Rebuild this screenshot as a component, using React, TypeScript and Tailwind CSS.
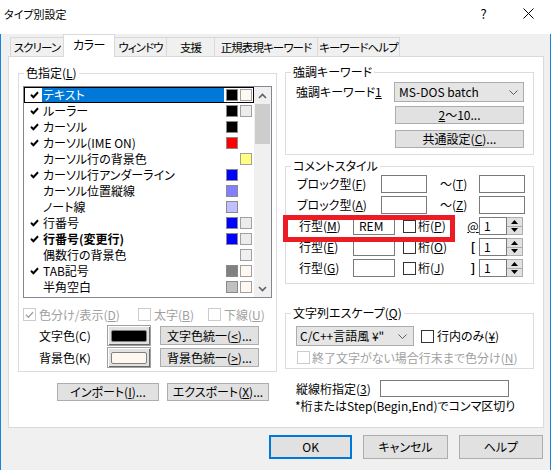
import React from 'react'

type Row = { label: string; check: boolean; a?: string; b?: string; sel?: boolean; bold?: boolean }

const rows: Row[] = [
  { label: 'テキスト', check: true, a: 'bg-[#000000]', b: 'bg-[#fff8f0]', sel: true },
  { label: 'ルーラー', check: true, a: 'bg-[#000000]', b: 'bg-[#ececec]' },
  { label: 'カーソル', check: true, a: 'bg-[#000000]' },
  { label: 'カーソル(IME ON)', check: true, a: 'bg-[#ff0000]' },
  { label: 'カーソル行の背景色', check: false, b: 'bg-[#ffff80]' },
  { label: 'カーソル行アンダーライン', check: true, a: 'bg-[#0000ff]' },
  { label: 'カーソル位置縦線', check: false, a: 'bg-[#8080ff]' },
  { label: 'ノート線', check: false, a: 'bg-[#c0c0ff]' },
  { label: '行番号', check: true, a: 'bg-[#0000ff]', b: 'bg-[#ececec]' },
  { label: '行番号(変更行)', check: true, a: 'bg-[#0000ff]', b: 'bg-[#ececec]', bold: true },
  { label: '偶数行の背景色', check: false, b: 'bg-[#f0f0f0]' },
  { label: 'TAB記号', check: true, a: 'bg-[#808080]', b: 'bg-[#fff8f0]' },
  { label: '半角空白', check: false, a: 'bg-[#c0c0c0]', b: 'bg-[#fff8f0]' },
]

function Tick({ color = '#000', w = 2 }: { color?: string; w?: number }) {
  return (
    <svg width="9" height="8" viewBox="0 0 9 8">
      <path d="M1 3.8 L3.4 6.2 L8 1.2" fill="none" stroke={color} strokeWidth={w} />
    </svg>
  )
}

function Box({ checked, disabled }: { checked?: boolean; disabled?: boolean }) {
  return (
    <span
      className={
        disabled
          ? 'flex h-[13px] w-[13px] shrink-0 items-center justify-center border border-[#cccccc] bg-white'
          : 'flex h-[13px] w-[13px] shrink-0 items-center justify-center border border-[#333333] bg-white'
      }
    >
      {checked && <Tick color={disabled ? '#a0a0a0' : '#000'} w={1.3} />}
    </span>
  )
}

function Btn({ children, className = '' }: { children: React.ReactNode; className?: string }) {
  return (
    <div className={`flex items-center justify-center whitespace-nowrap border border-[#adadad] bg-[#e1e1e1] ${className}`}>
      {children}
    </div>
  )
}

function Group({ title, className = '', children }: { title: React.ReactNode; className?: string; children: React.ReactNode }) {
  return (
    <fieldset className={`border border-[#dcdcdc] ${className}`}>
      <legend className="ml-[5px] px-[2px] leading-[14px]">{title}</legend>
      {children}
    </fieldset>
  )
}

function Chevron() {
  return (
    <svg width="9" height="5" viewBox="0 0 9 5">
      <path d="M0.5 0.5 L4.5 4.5 L8.5 0.5" fill="none" stroke="#606060" strokeWidth="1" />
    </svg>
  )
}

function Input({ className = '', children }: { className?: string; children?: React.ReactNode }) {
  return <div className={`flex items-center border border-[#7a7a7a] bg-white ${className}`}>{children}</div>
}

function Spin() {
  return (
    <div className="flex h-[18px] w-[44px]">
      <Input className="h-[18px] w-[28px] pl-[4px]">1</Input>
      <div className="flex w-[16px] flex-col border-y border-r border-[#adadad] bg-[#e1e1e1]">
        <div className="flex flex-1 items-center justify-center border-b border-[#adadad]">
          <svg width="7" height="4" viewBox="0 0 7 4"><path d="M0 4 L3.5 0 L7 4Z" fill="#000" /></svg>
        </div>
        <div className="flex flex-1 items-center justify-center">
          <svg width="7" height="4" viewBox="0 0 7 4"><path d="M0 0 L3.5 4 L7 0Z" fill="#000" /></svg>
        </div>
      </div>
    </div>
  )
}

function ColorBtn({ fill }: { fill: string }) {
  return (
    <div className="flex h-[21px] w-[44px] items-center justify-center border border-[#a0a0a0] bg-[#e1e1e1] shadow-[inset_1px_1px_0_#ffffff,inset_-1px_-1px_0_#696969]">
      <div className={`h-[12px] w-[36px] rounded-[2px] border border-[#808080] ${fill}`} />
    </div>
  )
}

function BlockRow({ a, b }: { a: string; b: string }) {
  return (
    <div className="flex h-[18px] items-center pl-[11px]">
      <span className="w-[84px]">ブロック型(<u>{a}</u>)</span>
      <Input className="h-[18px] w-[46px]" />
      <span className="w-[52px] pl-[13px]">〜(<u>{b}</u>)</span>
      <Input className="h-[18px] w-[46px]" />
    </div>
  )
}

function LineRow({ k, d, mark, text }: { k: string; d: string; mark: React.ReactNode; text?: string }) {
  return (
    <div className="flex h-[18px] items-center pl-[13px]">
      <span className="w-[54px]">行型(<u>{k}</u>)</span>
      <Input className="h-[18px] w-[42px] pl-[5px]">{text}</Input>
      <div className="ml-[8px] flex w-[64px] items-center gap-[2px]">
        <Box />
        <span>桁(<u>{d}</u>)</span>
      </div>
      <span className="w-[12px] text-center">{mark}</span>
      <Spin />
    </div>
  )
}

const tabs = [
  { t: 'スクリーン', w: 'w-[54px]' },
  { t: 'カラー', w: 'w-[52px]', sel: true },
  { t: 'ウィンドウ', w: 'w-[52px]' },
  { t: '支援', w: 'w-[48px]' },
  { t: '正規表現キーワード', w: 'w-[103px]' },
  { t: 'キーワードヘルプ', w: 'w-[82px]' },
]

export default function App() {
  return (
    <div className="h-[470px] w-[553px] bg-white font-['Noto_Sans_CJK_JP','Noto_Sans_CJK_SC',sans-serif] text-[12px] leading-[14px] text-black [font-feature-settings:'palt']">
      <div className="flex h-[27px] w-[551px] items-center">
        <span className="pl-[4px] text-[11px]">タイプ別設定</span>
        <span className="ml-auto flex w-[45px] justify-center text-[13px]">?</span>
        <span className="flex w-[45px] justify-center">
          <svg width="11" height="11" viewBox="0 0 11 11">
            <path d="M0.5 0.5 L10.5 10.5 M10.5 0.5 L0.5 10.5" stroke="#000" strokeWidth="1" />
          </svg>
        </span>
      </div>

      <div className="h-[442px] w-[551px] border-x border-b border-[#1883d7] bg-[#f0f0f0] px-[7px]">
        <div className="mt-[7px] flex h-[22px] items-end pl-[2px]">
          {tabs.map((tab, i) =>
            tab.sel ? (
              <div
                key={i}
                className={`relative z-10 -mb-px -ml-px flex h-[23px] items-center justify-center whitespace-nowrap border-x border-t border-[#d9d9d9] bg-white pb-[2px] tracking-[-0.5px] ${tab.w}`}
              >
                {tab.t}
              </div>
            ) : (
              <div
                key={i}
                className={`flex h-[19px] items-center justify-center overflow-hidden whitespace-nowrap border-t border-r border-[#d9d9d9] bg-[#f0f0f0] text-[11.5px] tracking-[-0.9px] ${i === 0 ? 'border-l' : ''} ${tab.w}`}
              >
                {tab.t}
              </div>
            ),
          )}
        </div>

        <div className="relative h-[372px] w-[536px] border border-[#d9d9d9] bg-white">
          <div className="flex items-start pl-[9px] pt-[8px]">
            {/* left column */}
            <div className="mt-[1px] w-[259px]">
              <Group title={<>色指定(<u>L</u>)</>} className="pb-[3px]">
                <div className="ml-[4px] mt-[6px] flex h-[212px] w-[249px] border border-[#828790] bg-white">
                  <div className="flex w-[230px] flex-col">
                    {rows.map((r, i) => (
                      <div
                        key={i}
                        className={`flex h-[16px] shrink-0 items-center ${r.sel ? 'shadow-[inset_0_0_0_1px_#000000]' : ''}`}
                      >
                        <span className="flex w-[18px] justify-start pl-[6px]">{r.check && <Tick />}</span>
                        <span
                          className={`flex h-[14px] w-[182px] items-center whitespace-nowrap pl-[1px] ${r.sel ? 'bg-[#0078d7] text-white' : ''} ${r.bold ? 'font-bold' : ''}`}
                        >
                          {r.label}
                        </span>
                        <span className="ml-[2px] h-[12px] w-[12px]">
                          {r.a && <span className={`block h-[12px] w-[12px] border border-[#8a8a8a] ${r.a}`} />}
                        </span>
                        <span className="ml-[2px] h-[12px] w-[12px]">
                          {r.b && <span className={`block h-[12px] w-[12px] border border-[#a0a0a0] ${r.b}`} />}
                        </span>
                      </div>
                    ))}
                  </div>
                  <div className="flex w-[17px] flex-col bg-[#f0f0f0]">
                    <div className="flex h-[17px] items-center justify-center">
                      <svg width="9" height="6" viewBox="0 0 9 6">
                        <path d="M1 5 L4.5 1.5 L8 5" fill="none" stroke="#606060" strokeWidth="1.6" />
                      </svg>
                    </div>
                    <div className="mx-[1px] h-[40px] bg-[#cdcdcd]" />
                    <div className="flex-1" />
                    <div className="flex h-[17px] items-center justify-center">
                      <svg width="9" height="6" viewBox="0 0 9 6">
                        <path d="M1 1 L4.5 4.5 L8 1" fill="none" stroke="#606060" strokeWidth="1.6" />
                      </svg>
                    </div>
                  </div>
                </div>

                <div className="mt-[10px] flex h-[13px] items-center pl-[4px] text-[#a0a0a0]">
                  <Box checked disabled />
                  <span className="ml-[3px] w-[99px]">色分け/表示(<u>D</u>)</span>
                  <Box disabled />
                  <span className="ml-[3px] w-[54px]">太字(<u>B</u>)</span>
                  <Box disabled />
                  <span className="ml-[3px]">下線(<u>U</u>)</span>
                </div>

                <div className="mt-[4px] flex h-[21px] items-center pl-[20px]">
                  <span className="w-[68px]">文字色(C)</span>
                  <ColorBtn fill="bg-[#000000]" />
                  <Btn className="ml-[9px] h-[19px] w-[99px]">文字色統一(<u>&lt;</u>)...</Btn>
                </div>
                <div className="mt-[1px] flex h-[21px] items-center pl-[20px]">
                  <span className="w-[68px]">背景色(K)</span>
                  <ColorBtn fill="bg-[#fff8f0]" />
                  <Btn className="ml-[9px] h-[19px] w-[99px]">背景色統一(<u>&gt;</u>)...</Btn>
                </div>
              </Group>

              <div className="mt-[11px] flex gap-[8px] pl-[39px]">
                <Btn className="h-[18px] w-[102px]">インポート(<u>I</u>)...</Btn>
                <Btn className="h-[18px] w-[102px]">エクスポート(<u>X</u>)...</Btn>
              </div>
            </div>

            {/* right column */}
            <div className="ml-[8px] w-[249px]">
              <Group title="強調キーワード" className="pb-[6px]">
                <div className="mt-[3px] flex h-[20px] items-center pl-[10px]">
                  <span className="w-[98px]">強調キーワード<u>1</u></span>
                  <div className="flex h-[20px] w-[130px] items-center justify-between border border-[#acacac] bg-[#e5e5e5] pl-[4px] pr-[5px]">
                    <span>MS-DOS batch</span>
                    <Chevron />
                  </div>
                </div>
                <Btn className="ml-[109px] mt-[4px] h-[18px] w-[129px]"><span><u>2</u>〜10...</span></Btn>
                <Btn className="ml-[109px] mt-[6px] h-[18px] w-[129px]"><span>共通設定(<u>C</u>)...</span></Btn>
              </Group>

              <Group title="コメントスタイル" className="mt-[4px] pb-[6px]">
                <div className="mt-[2px] flex flex-col gap-[3px]">
                  <BlockRow a="F" b="T" />
                  <BlockRow a="A" b="Z" />
                  <LineRow k="M" d="P" mark={<u>@</u>} text="REM" />
                  <LineRow k="E" d="O" mark={<b>[</b>} />
                  <LineRow k="G" d="J" mark={<b>]</b>} />
                </div>
              </Group>

              <Group title={<>文字列エスケープ(<u>Q</u>)</>} className="mt-[22px] pb-[4px]">
                <div className="mt-[6px] flex h-[20px] items-center pl-[10px]">
                  <div className="flex h-[20px] w-[118px] items-center justify-between border border-[#acacac] bg-[#e5e5e5] pl-[3px] pr-[6px]">
                    <span className="whitespace-nowrap">C/C++言語風 ¥"</span>
                    <Chevron />
                  </div>
                  <span className="ml-[7px]"><Box /></span>
                  <span className="ml-[3px]">行内のみ(<u>¥</u>)</span>
                </div>
                <div className="mt-[5px] flex h-[13px] items-center pl-[11px] text-[#a0a0a0]">
                  <Box disabled />
                  <span className="ml-[2px] whitespace-nowrap">終了文字がない場合行末まで色分け(<u>N</u>)</span>
                </div>
              </Group>

              <div className="mt-[11px] flex h-[17px] items-center pl-[11px]">
                <span className="w-[84px]">縦線桁指定(<u>3</u>)</span>
                <Input className="h-[17px] w-[129px]" />
              </div>
              <div className="mt-[2px] whitespace-nowrap pl-[10px]">*桁またはStep(Begin,End)でコンマ区切り</div>
            </div>
          </div>

          <div className="absolute left-[274px] top-[158px] h-[27px] w-[172px] border-[5px] border-[#ed1c24]" />
        </div>

        <div className="mt-[7px] flex gap-[11px] pl-[261px]">
          <div className="flex h-[24px] w-[84px] items-center justify-center border-2 border-[#0078d7] bg-[#e1e1e1]">OK</div>
          <Btn className="h-[24px] w-[85px]">キャンセル</Btn>
          <Btn className="h-[24px] w-[85px]">ヘルプ</Btn>
        </div>
      </div>
    </div>
  )
}
